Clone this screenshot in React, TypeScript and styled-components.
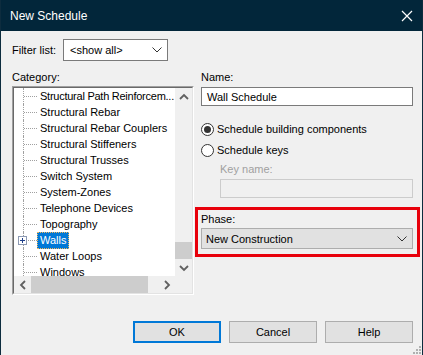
import React from 'react';
import styled, { createGlobalStyle } from 'styled-components';

const GlobalStyle = createGlobalStyle`
  body {
    margin: 0;
    font-family: "Liberation Sans", Arial, sans-serif;
    font-size: 11px;
    color: #000;
  }
`;

const Window = styled.div`
  position: relative;
  width: 423px;
  height: 355px;
  box-sizing: border-box;
  display: flex;
  flex-direction: column;
  background: #f0f0f0;
  border-left: 1px solid #0d2c3e;
  border-right: 1px solid #0d2c3e;
  overflow: hidden;
`;

const TitleBar = styled.div`
  height: 31px;
  flex: none;
  display: flex;
  align-items: center;
  justify-content: space-between;
  padding: 0 9px 0 9px;
  background: #02263a;
  color: #fff;
  font-size: 12px;
`;

const Body = styled.div`
  flex: 1;
  display: flex;
  flex-direction: column;
  padding: 8px 9px 12px 11px;
`;

const FilterRow = styled.div`
  display: flex;
  align-items: center;
  gap: 7px;
  height: 22px;
`;

const Combo = styled.div`
  width: 105px;
  height: 22px;
  box-sizing: border-box;
  display: flex;
  align-items: center;
  justify-content: space-between;
  padding: 0 5px 0 6px;
  background: #fff;
  border: 1px solid #7a7a7a;
`;

const Columns = styled.div`
  display: grid;
  grid-template-columns: 182px 212px;
  column-gap: 7px;
  margin-top: 9px;
`;

const Column = styled.div`
  display: flex;
  flex-direction: column;
`;

const FieldLabel = styled.div<{ $disabled?: boolean; $indent?: number; $gap?: number }>`
  height: 15px;
  line-height: 15px;
  white-space: nowrap;
  color: ${p => (p.$disabled ? '#a0a0a0' : '#000')};
  padding-left: ${p => p.$indent ?? 0}px;
  margin-top: ${p => p.$gap ?? 0}px;
`;

const TreeBox = styled.div`
  margin-top: 1px;
  height: 209px;
  box-sizing: border-box;
  border: 1px solid;
  border-color: #a0a0a0 #fff #fff #a0a0a0;
`;

const TreeInner = styled.div`
  height: 100%;
  box-sizing: border-box;
  border: 1px solid;
  border-color: #696969 #e3e3e3 #e3e3e3 #696969;
  display: grid;
  grid-template-columns: 1fr 17px;
  grid-template-rows: 1fr 17px;
  background: #fff;
`;

const TreeList = styled.div`
  overflow: hidden;
  min-width: 0;
`;

const Row = styled.div`
  position: relative;
  height: 16px;
  display: flex;
  align-items: center;
`;

const Indent = styled.span`
  width: 9px;
  flex: none;
`;

const Connector = styled.span`
  width: 14px;
  flex: none;
  align-self: stretch;
  display: flex;
  align-items: center;
  border-left: 1px dotted #a0a0a0;
  box-sizing: border-box;
`;

const HLine = styled.span`
  flex: 1;
  border-top: 1px dotted #a0a0a0;
`;

const ItemLabel = styled.span<{ $selected?: boolean; $tight?: boolean }>`
  min-width: 0;
  height: 17px;
  line-height: 15px;
  box-sizing: border-box;
  padding: 0 2px 0 2px;
  white-space: nowrap;
  overflow: hidden;
  letter-spacing: ${p => (p.$tight ? '-0.25px' : 'normal')};
  border: 1px dotted ${p => (p.$selected ? '#f2b860' : 'transparent')};
  background: ${p => (p.$selected ? '#0078d7' : 'transparent')};
  color: ${p => (p.$selected ? '#fff' : '#000')};
`;

const PlusBox = styled.span`
  position: absolute;
  left: 4px;
  top: 4px;
  width: 9px;
  height: 9px;
  box-sizing: border-box;
  border: 1px solid #8c99b3;
  background: #fff;
  display: flex;
  align-items: center;
  justify-content: center;
`;

const VScroll = styled.div`
  display: flex;
  flex-direction: column;
  background: #f0f0f0;
`;

const HScroll = styled.div`
  display: flex;
  background: #f0f0f0;
`;

const ArrowCell = styled.div`
  width: 17px;
  height: 17px;
  flex: none;
  display: flex;
  align-items: center;
  justify-content: center;
`;

const Track = styled.div<{ $horizontal?: boolean }>`
  flex: 1;
  display: flex;
  flex-direction: ${p => (p.$horizontal ? 'row' : 'column')};
  justify-content: ${p => (p.$horizontal ? 'flex-start' : 'flex-end')};
`;

const Thumb = styled.div<{ $length: number; $horizontal?: boolean }>`
  background: #cdcdcd;
  width: ${p => (p.$horizontal ? `${p.$length}px` : '100%')};
  height: ${p => (p.$horizontal ? '100%' : `${p.$length}px`)};
`;

const Corner = styled.div`
  background: #f0f0f0;
`;

const TextInput = styled.div<{ $disabled?: boolean }>`
  height: 19px;
  box-sizing: border-box;
  display: flex;
  align-items: center;
  padding-left: 5px;
  border: 1px solid ${p => (p.$disabled ? '#cccccc' : '#7a7a7a')};
  background: ${p => (p.$disabled ? '#f0f0f0' : '#fff')};
  margin-left: ${p => (p.$disabled ? 19 : 0)}px;
  margin-top: 2px;
`;

const RadioRow = styled.div<{ $gap: number }>`
  display: flex;
  align-items: center;
  gap: 3px;
  height: 16px;
  margin-top: ${p => p.$gap}px;
`;

const RadioCircle = styled.span<{ $checked?: boolean }>`
  width: 13px;
  height: 13px;
  box-sizing: border-box;
  border-radius: 50%;
  border: 1px solid #333;
  background: #fff;
  display: flex;
  align-items: center;
  justify-content: center;

  &::after {
    content: '';
    width: 7px;
    height: 7px;
    border-radius: 50%;
    background: ${p => (p.$checked ? '#333' : 'transparent')};
  }
`;

const PhaseGroup = styled.div`
  margin: 9px -7px 0 -6px;
  border: 3px solid #e8000b;
  padding: 2px 4px 5px 3px;
`;

const Select = styled.div`
  margin-top: 1px;
  height: 21px;
  box-sizing: border-box;
  display: flex;
  align-items: center;
  justify-content: space-between;
  padding: 0 5px 0 4px;
  background: #e1e1e1;
  border: 1px solid #adadad;
`;

const ButtonRow = styled.div`
  margin-top: auto;
  display: flex;
  justify-content: flex-end;
  gap: 8px;
`;

const Button = styled.div<{ $default?: boolean }>`
  width: 88px;
  height: 22px;
  box-sizing: border-box;
  display: flex;
  align-items: center;
  justify-content: center;
  background: #e1e1e1;
  border: ${p => (p.$default ? '2px solid #0078d7' : '1px solid #adadad')};
`;

const Grip = styled.svg`
  position: absolute;
  right: 1px;
  bottom: 1px;
`;

const Chevron = ({ dir }: { dir: 'up' | 'down' | 'left' | 'right' }) => {
  const vertical = dir === 'up' || dir === 'down';
  const pts = {
    up: '1,6 5,2 9,6',
    down: '1,2 5,6 9,2',
    left: '6,1 2,5 6,9',
    right: '2,1 6,5 2,9',
  }[dir];
  return (
    <svg width={vertical ? 10 : 8} height={vertical ? 8 : 10}>
      <polyline points={pts} fill="none" stroke="#606060" strokeWidth="1.8" />
    </svg>
  );
};

const ThinChevron = () => (
  <svg width="10" height="6">
    <polyline points="0.5,0.5 5,5 9.5,0.5" fill="none" stroke="#333" strokeWidth="1" />
  </svg>
);

// first entry is truncated by the app itself
const items = [
  'Structural Path Reinforcem...',
  'Structural Rebar',
  'Structural Rebar Couplers',
  'Structural Stiffeners',
  'Structural Trusses',
  'Switch System',
  'System-Zones',
  'Telephone Devices',
  'Topography',
  'Walls',
  'Water Loops',
  'Windows',
];

export default function App() {
  return (
    <>
      <GlobalStyle />
      <Window>
        <TitleBar>
          <span>New Schedule</span>
          <svg width="12" height="12">
            <path d="M1 1 L11 11 M11 1 L1 11" stroke="#fff" strokeWidth="1.2" />
          </svg>
        </TitleBar>
        <Body>
          <FilterRow>
            <span>Filter list:</span>
            <Combo>
              <span>&lt;show all&gt;</span>
              <ThinChevron />
            </Combo>
          </FilterRow>
          <Columns>
            <Column>
              <FieldLabel>Category:</FieldLabel>
              <TreeBox>
                <TreeInner>
                  <TreeList>
                    {items.map((name, i) => (
                      <Row key={name}>
                        <Indent />
                        <Connector>
                          <HLine />
                        </Connector>
                        <ItemLabel $selected={name === 'Walls'} $tight={i === 0}>{name}</ItemLabel>
                        {name === 'Walls' && (
                          <PlusBox>
                            <svg width="7" height="7">
                              <path d="M1 3.5 H6 M3.5 1 V6" stroke="#1f3f8a" strokeWidth="1" />
                            </svg>
                          </PlusBox>
                        )}
                      </Row>
                    ))}
                  </TreeList>
                  <VScroll>
                    <ArrowCell><Chevron dir="up" /></ArrowCell>
                    <Track>
                      <Thumb $length={17} />
                    </Track>
                    <ArrowCell><Chevron dir="down" /></ArrowCell>
                  </VScroll>
                  <HScroll>
                    <ArrowCell><Chevron dir="left" /></ArrowCell>
                    <Track $horizontal>
                      <Thumb $horizontal $length={117} />
                    </Track>
                    <ArrowCell><Chevron dir="right" /></ArrowCell>
                  </HScroll>
                  <Corner />
                </TreeInner>
              </TreeBox>
            </Column>
            <Column>
              <FieldLabel>Name:</FieldLabel>
              <TextInput>Wall Schedule</TextInput>
              <RadioRow $gap={15}>
                <RadioCircle $checked />
                <span>Schedule building components</span>
              </RadioRow>
              <RadioRow $gap={5}>
                <RadioCircle />
                <span>Schedule keys</span>
              </RadioRow>
              <FieldLabel $disabled $indent={19} $gap={4}>Key name:</FieldLabel>
              <TextInput $disabled />
              <PhaseGroup>
                <FieldLabel>Phase:</FieldLabel>
                <Select>
                  <span>New Construction</span>
                  <ThinChevron />
                </Select>
              </PhaseGroup>
            </Column>
          </Columns>
          <ButtonRow>
            <Button $default>OK</Button>
            <Button>Cancel</Button>
            <Button>Help</Button>
          </ButtonRow>
        </Body>
        <Grip width="9" height="9">
          {[[7, 1], [4, 4], [7, 4], [1, 7], [4, 7], [7, 7]].map(([x, y]) => (
            <rect key={`${x}-${y}`} x={x} y={y} width="2" height="2" fill="#b0b0b0" />
          ))}
        </Grip>
      </Window>
    </>
  );
}
